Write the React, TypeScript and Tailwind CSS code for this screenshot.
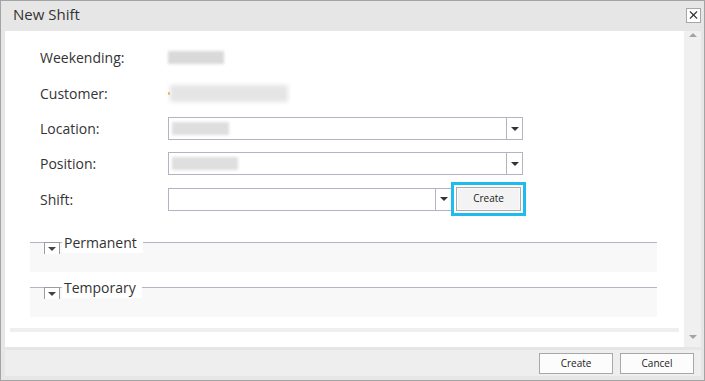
import { X } from 'lucide-react';

function Caret({ color = '#333' }: { color?: string }) {
  return (
    <svg width="8" height="4" viewBox="0 0 8 4" className="block">
      <path d="M0 0 L8 0 L4 4 Z" fill={color} />
    </svg>
  );
}

function Select({ width, blur }: { width: string; blur?: string }) {
  return (
    <div className={`flex h-[23px] border border-[#b3b3c3] bg-white ${width}`}>
      <div className="flex-1 flex items-center pl-[3px]">
        {blur && <div className={`h-[13px] bg-[#dedede] blur-[1.5px] ${blur}`} />}
      </div>
      <div className="w-[16px] border-l border-[#b3b3c3] flex items-center justify-center">
        <Caret />
      </div>
    </div>
  );
}

function Section({ title }: { title: string }) {
  return (
    <div className="relative h-[30px] border-t border-[#b4b4c4] bg-[#f8f8f8]">
      <div className="absolute left-[14px] top-[-10px] flex items-start">
        <div className="mt-[9px] w-[16px] h-[12px] border-t border-x border-[#9c9c9c] bg-white flex items-center justify-center pt-[1px]">
          <Caret color="#444" />
        </div>
        <span className="ml-[2px] bg-white pl-[2px] pr-[6px] text-[14px] leading-[20px] text-[#333]">{title}</span>
      </div>
    </div>
  );
}

export default function App() {
  return (
    <div className="w-[705px] h-[381px] border border-[#a4a4a4] bg-[#e6e6e6] flex flex-col font-['Open_Sans',sans-serif] text-[#333]">
      {/* Title bar */}
      <div className="h-[30px] flex items-center justify-between pl-[12px] pr-[3px]">
        <span className="text-[15px] pb-[3px]">New Shift</span>
        <button className="w-[15px] h-[15px] mb-[2px] bg-white border border-[#a6a6a6] flex items-center justify-center">
          <X className="w-[14px] h-[14px] text-[#333]" strokeWidth={2} />
        </button>
      </div>

      {/* Body */}
      <div className="flex-1 flex flex-col pl-[4px] pr-[3px] pb-[4px]">
        <div className="flex h-[316px] bg-white">
          <div className="flex-1 flex flex-col min-w-0">
            <div className="pt-[8px] pl-[35px] text-[14px]">
              <div className="flex items-center h-[36px]">
                <span className="w-[128px]">Weekending:</span>
                <div className="w-[56px] h-[13px] bg-[#d9d9d9] blur-[1.5px]" />
              </div>
              <div className="flex items-center h-[36px]">
                <span className="w-[128px]">Customer:</span>
                <div className="w-[2px] h-[3px] bg-[#f0b040]" />
                <div className="w-[118px] h-[17px] bg-[#e5e5e5] blur-[2px]" />
              </div>
              <div className="flex items-center h-[35px]">
                <span className="w-[128px]">Location:</span>
                <Select width="w-[355px]" blur="w-[57px]" />
              </div>
              <div className="flex items-center h-[35px]">
                <span className="w-[128px]">Position:</span>
                <Select width="w-[355px]" blur="w-[66px]" />
              </div>
              <div className="flex items-center h-[36px]">
                <span className="w-[128px]">Shift:</span>
                <Select width="w-[284px]" />
                <div className="ml-[-1px] border-[3px] border-[#1ebcec] pt-[1px] pb-[2px] px-[2px] bg-white">
                  <button className="w-[65px] h-[24px] border border-[#ababab] bg-[#f3f3f3] shadow-[inset_0_0_0_1px_#fafafa] text-[10px] text-[#222]">
                    Create
                  </button>
                </div>
              </div>
            </div>

            <div className="ml-[25px] w-[627px] mt-[25px]">
              <Section title="Permanent" />
              <div className="mt-[15px]">
                <Section title="Temporary" />
              </div>
            </div>

            <div className="mt-[11px] mx-[5px] h-[4px] bg-[#efefef]" />
          </div>

          {/* Scrollbar */}
          <div className="w-[17px] bg-[#f0f0f0] flex flex-col items-center justify-between pt-[2px] pb-[8px]">
            <svg width="8" height="4" viewBox="0 0 8 4">
              <path d="M0 4 L8 4 L4 0 Z" fill="#a3a3a3" />
            </svg>
            <Caret color="#a3a3a3" />
          </div>
        </div>

        {/* Footer */}
        <div className="mt-[3px] h-[26px] bg-[#eeeeee] flex items-center justify-end gap-[7px] pr-[7px]">
          <button className="w-[74px] h-[21px] border border-[#a8a8a8] bg-[#fcfcfc] text-[10px] text-[#222]">Create</button>
          <button className="w-[74px] h-[21px] border border-[#a8a8a8] bg-[#fcfcfc] text-[10px] text-[#222]">Cancel</button>
        </div>
      </div>
    </div>
  );
}
